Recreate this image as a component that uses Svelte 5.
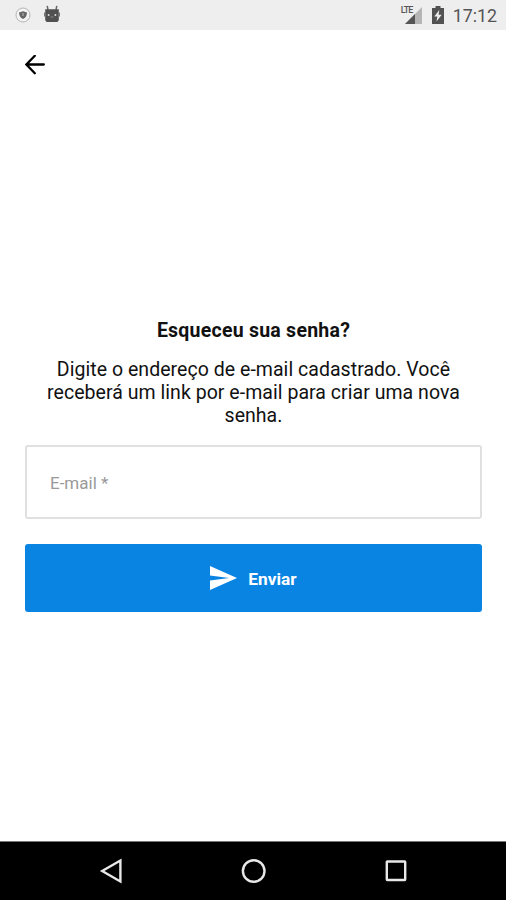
<script lang="ts">
  let email = '';
  const time = '17:12';

  function handleSubmit() {
    email = email.trim();
  }
</script>

<div class="screen">
  <header class="status-bar">
    <div class="status-group">
      <svg class="shield" width="16" height="16" viewBox="0 0 16 16">
        <circle cx="8" cy="8" r="7" fill="#f4f4f4" stroke="#b4b4b4" stroke-width="1" />
        <path d="M8 4.200l4 1.200c0 3-1.300 5.300-4 6.600-2.700-1.300-4-3.600-4-6.600z" fill="#666" />
        <path d="M8 6v3" stroke="#bbb" stroke-width="1" />
      </svg>
      <svg class="robot" width="16" height="18" viewBox="0 0 16 18">
        <path d="M3.200.8l.8 4M12.800.8l-.8 4" stroke="#666" stroke-width="1.500" />
        <path d="M1.200 4.200h13.600v10q0 2.800-2.800 2.800H4q-2.800 0-2.800-2.800z" fill="#505050" />
        <path d="M.6 7.500v4M15.400 7.500v4" stroke="#777" stroke-width="1.200" />
        <circle cx="4.600" cy="10" r="1" fill="#ddd" />
        <circle cx="11.400" cy="10" r="1" fill="#ddd" />
        <path d="M6.500 12h3" stroke="#888" stroke-width="1" />
      </svg>
    </div>
    <div class="status-group">
      <div class="signal">
        <span class="lte">LTE</span>
        <svg width="17" height="17" viewBox="0 0 17 17">
          <path d="M17 0v17H0z" fill="#b5b5b5" />
          <path d="M10 7v10H0z" fill="#555" />
        </svg>
      </div>
      <svg class="battery" width="12" height="18" viewBox="0 0 12 18">
        <path d="M3.500 0h5v2H12v16H0V2h3.500z" fill="#525252" />
        <path d="M7.300 4L2.300 10.500h3L4.500 15.500l5.200-6.700H6.600z" fill="#eee" />
      </svg>
      <span class="time">{time}</span>
    </div>
  </header>

  <div class="toolbar">
    <button class="back-button" aria-label="Voltar">
      <svg width="20" height="20" viewBox="0 0 20 20">
        <path d="M18.800 9.500H1.800M9.800.8L1.400 9.500l8.400 8.700" fill="none" stroke="#000" stroke-width="2.300" stroke-linecap="round" />
      </svg>
    </button>
  </div>

  <main>
    <h1>Esqueceu sua senha?</h1>
    <p>
      Digite o endereço de e-mail cadastrado. Você<br />
      receberá um link por e-mail para criar uma nova<br />
      senha.
    </p>
    <input class="email-input" type="text" placeholder="E-mail *" aria-label="E-mail" bind:value={email} />
    <button class="submit-button" on:click={handleSubmit}>
      <svg width="27" height="24" viewBox="0 0 26 23">
        <path d="M0 0l26 11.500L0 23v-9l18.500-2.500L0 9z" fill="#fff" />
      </svg>
      <span>Enviar</span>
    </button>
  </main>

  <nav class="nav-bar">
    <svg width="26" height="26" viewBox="0 0 26 26">
      <path d="M22.400 2.500v21L4.200 13z" />
    </svg>
    <svg width="26" height="26" viewBox="0 0 26 26">
      <circle cx="12.700" cy="13" r="10.800" />
    </svg>
    <svg width="26" height="26" viewBox="0 0 26 26">
      <rect x="3.800" y="3.500" width="18.400" height="18.500" rx="0.500" />
    </svg>
  </nav>
</div>

<style>
  :global(body) {
    margin: 0;
    background-color: #fff;
  }

  .screen {
    display: flex;
    flex-direction: column;
    height: 900px;
    font-family: Roboto, 'Liberation Sans', sans-serif;
    color: #111;
    background-color: #fff;
  }

  /* Status bar */
  .status-bar {
    display: flex;
    justify-content: space-between;
    box-sizing: border-box;
    height: 30px;
    padding: 0 9px 0 15px;
    background-color: #eee;
  }

  .status-group {
    display: flex;
    align-items: center;
  }

  .robot {
    margin: -2px 0 0 13px;
  }

  .signal {
    position: relative;
    display: flex;
    margin-right: 10px;
  }

  .lte {
    position: absolute;
    top: -2px;
    left: -4px;
    font-size: 9px;
    line-height: 10px;
    letter-spacing: -0.8px;
    font-weight: 500;
    color: #555;
  }

  .battery {
    margin-right: 9px;
  }

  .time {
    font-size: 17.8px;
    line-height: 22px;
    color: #555;
    margin-top: 2px;
  }

  /* Toolbar */
  .toolbar {
    padding: 25px 25px 0;
  }

  .back-button {
    display: block;
    padding: 0;
    border: none;
    background: none;
    cursor: pointer;
  }

  .back-button svg {
    display: block;
  }

  /* Form */
  main {
    flex: 1;
    display: flex;
    flex-direction: column;
    padding: 244px 24px 0 25px;
  }

  h1 {
    margin: 0 0 16px;
    font-size: 19.5px;
    line-height: 23px;
    font-weight: 700;
    letter-spacing: 0.24px;
    text-align: center;
  }

  p {
    margin: 0 0 18px;
    font-size: 19.5px;
    line-height: 23px;
    letter-spacing: 0.04px;
    text-align: center;
    white-space: nowrap;
  }

  .email-input {
    box-sizing: border-box;
    width: 100%;
    height: 74px;
    margin-bottom: 25px;
    padding: 2px 23px 0;
    border: 2px solid #e0e0e0;
    border-radius: 3px;
    font-family: inherit;
    font-size: 17px;
    outline: none;
  }

  .email-input::placeholder {
    color: #999;
    opacity: 1;
  }

  .submit-button {
    display: flex;
    align-items: center;
    justify-content: center;
    gap: 11px;
    height: 68px;
    border: none;
    border-radius: 3px;
    background-color: #0984e3;
    color: #fff;
    font-family: inherit;
    font-size: 17.3px;
    font-weight: 700;
    cursor: pointer;
  }

  .submit-button span {
    padding-top: 2px;
  }

  /* Navigation bar */
  .nav-bar {
    display: flex;
    justify-content: space-between;
    align-items: center;
    box-sizing: border-box;
    height: 59px;
    padding: 0 97px 0 98px;
    border-top: 1px solid #777;
    background-color: #000;
  }

  .nav-bar svg {
    fill: none;
    stroke: #e8e8e8;
    stroke-width: 2.4;
  }
</style>
